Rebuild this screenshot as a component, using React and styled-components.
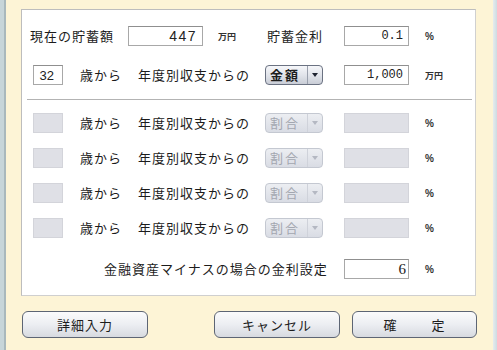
import React from "react";
import styled, { createGlobalStyle } from "styled-components";

const Global = createGlobalStyle`
  html, body { margin: 0; padding: 0; }
  body { width: 497px; height: 350px; overflow: hidden; background: #fdf4d6; }
  #root { width: 497px; height: 350px; }
`;

const jp = `"Noto Sans CJK JP", "Noto Sans", sans-serif`;

const Frame = styled.div`
  display: flex;
  width: 497px;
  height: 350px;
  font-family: ${jp};
  color: #1c1c1c;
`;

const LeftEdge = styled.div`
  width: 4px;
  background: #c7d5d9;
  border-right: 2px solid #a9b8bc;
`;

const RightEdge = styled.div`
  width: 4px;
  background: linear-gradient(to right, #e6ecee, #cfdce1);
`;

const Main = styled.div`
  flex: 1;
  background: #fdf4d6;
  padding: 9px 0 0 15px;
  display: flex;
  flex-direction: column;
`;

const Panel = styled.div`
  width: 453px;
  background: #ffffff;
  border: 1px solid #bdbdbd;
  border-right-color: #d0d0d0;
  border-bottom-color: #cfcfcf;
  padding: 16px 0 16px;
  display: flex;
  flex-direction: column;
`;

const Row = styled.div`
  display: flex;
  align-items: center;
  height: 20px;
  padding-left: ${(p) => p.$pl}px;
  margin-top: ${(p) => p.$mt || 0}px;
`;

const Label = styled.span`
  width: ${(p) => p.$w}px;
  margin-left: ${(p) => p.$ml || 0}px;
  flex: none;
  font-size: 13px;
  letter-spacing: 1px;
  line-height: 20px;
  white-space: nowrap;
`;

const Field = styled.div`
  width: ${(p) => p.$w}px;
  height: 20px;
  flex: none;
  box-sizing: border-box;
  margin-left: ${(p) => p.$ml || 0}px;
  border: 1px solid ${(p) => (p.$off ? "#d3d4da" : "#a8a8a8")};
  border-top-color: ${(p) => (p.$off ? "#d3d4da" : "#8f8f8f")};
  background: ${(p) => (p.$off ? "#dfe0e6" : "#ffffff")};
  display: flex;
  align-items: center;
  justify-content: flex-end;
  padding-right: ${(p) => p.$pr ?? 5}px;
  font-family: ${(p) => p.$font};
  font-size: ${(p) => p.$fs}px;
  letter-spacing: ${(p) => p.$ls || 0}px;
  color: #222;
`;

const Unit = styled.span`
  margin-left: ${(p) => p.$ml}px;
  width: ${(p) => p.$w || 0}px;
  flex: none;
  font-size: ${(p) => p.$fs}px;
  font-weight: 700;
  font-family: ${(p) => p.$font || jp};
  color: #333;
  white-space: nowrap;
`;

const Select = styled.div`
  width: 58px;
  height: 20px;
  flex: none;
  box-sizing: border-box;
  border: 1px solid ${(p) => (p.$off ? "#c4c8d1" : "#6b7282")};
  border-radius: 4px;
  background: ${(p) =>
    p.$off
      ? "linear-gradient(#eceef2, #d9dce4)"
      : "linear-gradient(#f6f7fa, #dfe2e9 55%, #c9cdd6)"};
  display: flex;
  align-items: stretch;
  overflow: hidden;
`;

const SelectText = styled.span`
  flex: 1;
  padding-left: 4px;
  font-size: 13px;
  letter-spacing: 2px;
  line-height: 18px;
  font-weight: ${(p) => (p.$off ? 400 : 700)};
  color: ${(p) => (p.$off ? "#a3a7b0" : "#1e1e1e")};
`;

const SelectArrow = styled.span`
  width: 14px;
  border-left: 1px solid ${(p) => (p.$off ? "#cfd2da" : "#9aa0ad")};
  display: flex;
  align-items: center;
  justify-content: center;
  &::after {
    content: "";
    border-left: 3px solid transparent;
    border-right: 3px solid transparent;
    border-top: 4px solid ${(p) => (p.$off ? "#b4b8c2" : "#1e2330")};
  }
`;

const Separator = styled.hr`
  margin: 14px 3px 0 5px;
  border: none;
  border-top: 1px solid #b3b3b3;
  height: 0;
`;

const Buttons = styled.div`
  display: flex;
  align-items: center;
  margin-top: 15px;
  padding-left: 1px;
  width: 455px;
`;

const Spacer = styled.div`
  flex: 1;
`;

const Button = styled.button`
  width: ${(p) => p.$w}px;
  height: 27px;
  margin-left: ${(p) => p.$ml || 0}px;
  box-sizing: border-box;
  border: 1.5px solid #5d6574;
  border-radius: 6px;
  background: linear-gradient(#fbfbfc, #eceef2 50%, #d7dae0);
  font-family: ${jp};
  font-size: 13px;
  letter-spacing: 1px;
  color: #1c1c1c;
  padding: 0;
  display: flex;
  align-items: center;
  justify-content: center;
  gap: ${(p) => p.$gap || 0}px;
`;

const sans = `"Liberation Sans", sans-serif`;
const mono = `"Liberation Mono", monospace`;

function SubRow({ mt }) {
  return (
    <Row $pl={11} $mt={mt}>
      <Field $w={30} $off />
      <Label $w={58} $ml={17}>歳から</Label>
      <Label $w={127}>年度別収支からの</Label>
      <Select $off>
        <SelectText $off>割合</SelectText>
        <SelectArrow $off />
      </Select>
      <Field $w={65} $ml={21} $off />
      <Unit $ml={16} $fs={10} $font={sans}>%</Unit>
    </Row>
  );
}

export default function App() {
  return (
    <>
      <Global />
      <Frame>
        <LeftEdge />
        <Main>
          <Panel>
            <Row $pl={8}>
              <Label $w={98}>現在の貯蓄額</Label>
              <Field $w={75} $font={sans} $fs={14} $ls={1.5}>447</Field>
              <Unit $ml={15} $w={49} $fs={9}>万円</Unit>
              <Label $w={77}>貯蓄金利</Label>
              <Field $w={65} $font={mono} $fs={12}>0.1</Field>
              <Unit $ml={16} $fs={10} $font={sans}>%</Unit>
            </Row>
            <Row $pl={11} $mt={19}>
              <Field $w={30} $font={sans} $fs={13} $pr={8}>32</Field>
              <Label $w={58} $ml={17}>歳から</Label>
              <Label $w={127}>年度別収支からの</Label>
              <Select>
                <SelectText>金額</SelectText>
                <SelectArrow />
              </Select>
              <Field $w={65} $ml={21} $font={mono} $fs={12}>1,000</Field>
              <Unit $ml={16} $fs={9}>万円</Unit>
            </Row>
            <Separator />
            <SubRow mt={13} />
            <SubRow mt={15} />
            <SubRow mt={15} />
            <SubRow mt={15} />
            <Row $pl={82} $mt={21}>
              <Label $w={240}>金融資産マイナスの場合の金利設定</Label>
              <Field $w={65} $font={`"Liberation Serif", serif`} $fs={15} $pr={2}>6</Field>
              <Unit $ml={16} $fs={10} $font={sans}>%</Unit>
            </Row>
          </Panel>
          <Buttons>
            <Button $w={126}>詳細入力</Button>
            <Spacer />
            <Button $w={126}>キャンセル</Button>
            <Button $w={125} $ml={12} $gap={34}>
              <span>確</span>
              <span>定</span>
            </Button>
          </Buttons>
        </Main>
        <RightEdge />
      </Frame>
    </>
  );
}
